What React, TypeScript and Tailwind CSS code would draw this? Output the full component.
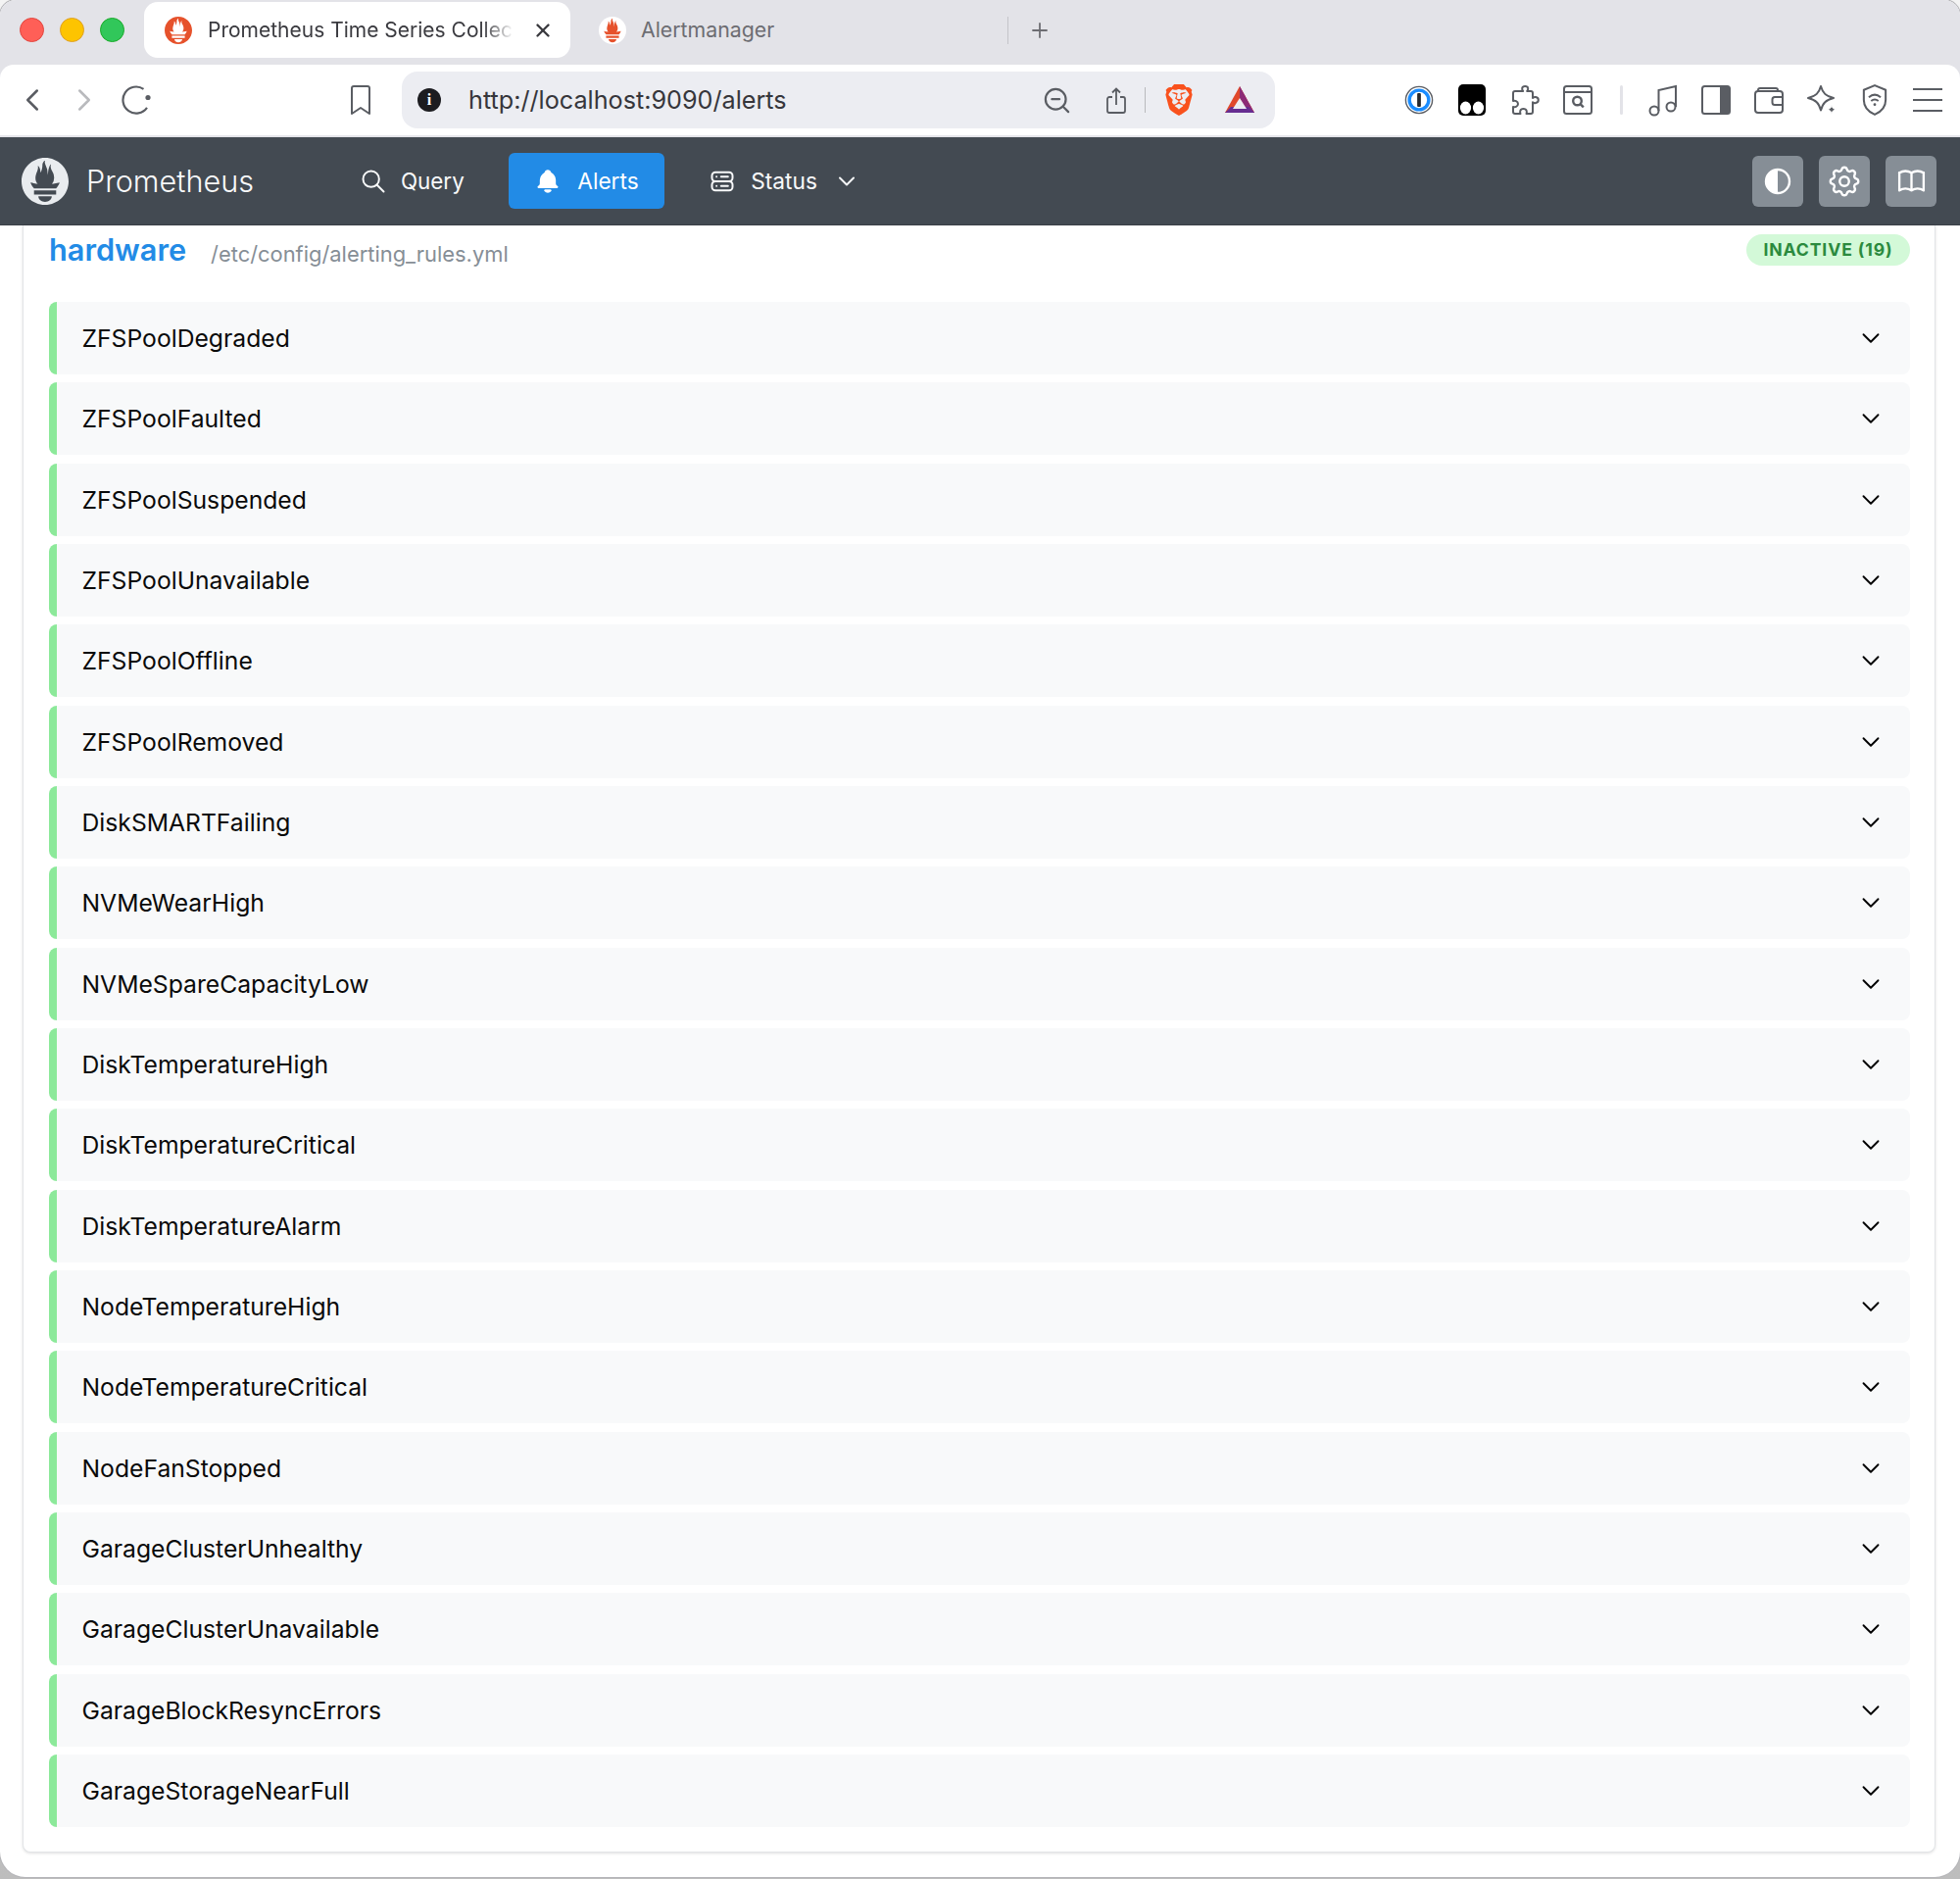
import { SiBrave, SiPrometheus } from "react-icons/si";
import {
  TbBellFilled,
  TbBook,
  TbChevronDown,
  TbSearch,
  TbServer2,
  TbSettings,
} from "react-icons/tb";
import { ChevronLeft, ChevronRight, Plus, X, ZoomOut } from "lucide-react";
import type { ReactNode } from "react";

const rules = [
  "ZFSPoolDegraded",
  "ZFSPoolFaulted",
  "ZFSPoolSuspended",
  "ZFSPoolUnavailable",
  "ZFSPoolOffline",
  "ZFSPoolRemoved",
  "DiskSMARTFailing",
  "NVMeWearHigh",
  "NVMeSpareCapacityLow",
  "DiskTemperatureHigh",
  "DiskTemperatureCritical",
  "DiskTemperatureAlarm",
  "NodeTemperatureHigh",
  "NodeTemperatureCritical",
  "NodeFanStopped",
  "GarageClusterUnhealthy",
  "GarageClusterUnavailable",
  "GarageBlockResyncErrors",
  "GarageStorageNearFull",
];

function Slot({ children }: { children: ReactNode }) {
  return <div className="flex w-[54px] shrink-0 items-center justify-center text-[#5a5d63]">{children}</div>;
}

// flame only, orange on a white disc
function FlameFavicon() {
  return (
    <svg viewBox="0 0 24 24" className="h-[28px] w-[28px]">
      <circle cx="12" cy="12" r="12" fill="#fff" />
      <path
        fill="#e6522c"
        d="M12 22.46c-1.885 0-3.414-1.26-3.414-2.814h6.828c0 1.553-1.528 2.813-3.414 2.813zm5.64-3.745H6.36v-2.046h11.28v2.046zm-.04-3.098H6.391c-.037-.043-.075-.086-.111-.13-1.155-1.401-1.427-2.133-1.691-2.879-.005-.025 1.4.287 2.395.511 0 0 .513.119 1.262.255-.72-.843-1.147-1.915-1.147-3.01 0-2.406 1.845-4.508 1.18-6.207.648.053 1.34 1.367 1.387 3.422.689-.951.977-2.69.977-3.755 0-1.103.727-2.385 1.454-2.429-.648 1.069.168 1.984.894 4.256.272.854.237 2.29.447 3.201.07-1.892.395-4.652 1.595-5.605-.529 1.2.079 2.702.494 3.424.671 1.164 1.078 2.047 1.078 3.716a4.642 4.642 0 0 1-1.11 2.996c.792-.149 1.34-.283 1.34-.283l2.573-.502s-.374 1.538-1.81 3.019z"
      />
    </svg>
  );
}

function TabStrip() {
  return (
    <div className="flex h-[66px] items-start bg-[#e3e3e8] pt-[2px]">
      <div className="flex h-[57px] items-center gap-[16px] pl-[20px]">
        <div className="h-[25px] w-[25px] rounded-full border border-[#e2463f] bg-[#ff5f57]" />
        <div className="h-[25px] w-[25px] rounded-full border border-[#dfa023] bg-[#fdc400]" />
        <div className="h-[25px] w-[25px] rounded-full border border-[#1aab29] bg-[#31c75a]" />
      </div>
      <div className="ml-[20px] flex h-[57px] w-[435px] items-center rounded-[14px] bg-white pl-[21px]">
        <SiPrometheus className="h-[28px] w-[28px] text-[#e6522c]" />
        <span className="ml-[16px] w-[312px] overflow-hidden whitespace-nowrap text-[21px] text-[#3a3a3f] [mask-image:linear-gradient(to_right,black_90%,transparent)]">
          Prometheus Time Series Collec
        </span>
        <X className="ml-[19px] h-[22px] w-[22px] text-[#3a3a3f]" strokeWidth={2.6} />
      </div>
      <div className="flex h-[57px] items-center">
        <div className="ml-[29px]">
          <FlameFavicon />
        </div>
        <span className="ml-[15px] text-[21.3px] text-[#6d6d72]">Alertmanager</span>
        <div className="ml-[238px] h-[28px] w-[1px] bg-[#c4c4c9]" />
        <Plus className="ml-[20px] h-[24px] w-[24px] text-[#6d6d72]" strokeWidth={1.8} />
      </div>
    </div>
  );
}

function Toolbar() {
  return (
    <div className="bg-[#e3e3e8]">
      <div className="flex h-[72px] items-center rounded-t-[14px] bg-white pl-[6px]">
        <div className="flex w-[53px] justify-center text-[#5a5d63]">
          <ChevronLeft className="h-[38px] w-[38px]" strokeWidth={1.6} />
        </div>
        <div className="flex w-[53px] justify-center text-[#b9babd]">
          <ChevronRight className="h-[38px] w-[38px]" strokeWidth={1.6} />
        </div>
        <div className="flex w-[53px] justify-center text-[#5a5d63]">
          <svg viewBox="0 0 30 30" fill="none" stroke="currentColor" strokeWidth="2.2" className="h-[30px] w-[30px]">
            <path d="M22.5 3.8A13.5 13.5 0 1 0 26 22.8" />
            <circle cx="27" cy="12.5" r="2.6" fill="currentColor" stroke="none" />
          </svg>
        </div>
        <div className="ml-[176px]">
          <Slot>
            <svg viewBox="0 0 22 30" fill="none" stroke="currentColor" strokeWidth="2" strokeLinejoin="round" className="h-[30px] w-[22px]">
              <path d="M2 3a2 2 0 0 1 2-2h14a2 2 0 0 1 2 2v26l-9-6-9 6z" />
            </svg>
          </Slot>
        </div>
        <div className="ml-[15px] flex h-[58px] w-[891px] items-center rounded-[16px] bg-[#ecedf2]">
          <div className="ml-[16px] flex h-[24px] w-[24px] items-center justify-center rounded-full bg-[#1c1c20] font-['Liberation_Serif',serif] text-[16px] font-bold text-white">
            i
          </div>
          <span className="ml-[28px] mt-[2px] w-[520px] text-[25.2px] text-[#36363b]">http://localhost:9090/alerts</span>
          <div className="ml-[64.5px] flex items-center">
            <ZoomOut className="h-[31px] w-[31px] text-[#5a5d63]" strokeWidth={1.7} />
            <svg viewBox="0 0 20 27" fill="none" stroke="#5a5d63" strokeWidth="1.8" className="ml-[35.5px] h-[27px] w-[20px]">
              <path d="M6 10H3a2 2 0 0 0-2 2v12a2 2 0 0 0 2 2h14a2 2 0 0 0 2-2V12a2 2 0 0 0-2-2h-3" />
              <path d="M10 18V2M6 5.5 10 1.5l4 4" />
            </svg>
            <div className="ml-[19px] h-[26px] w-[1px] bg-[#b9babd]" />
            <SiBrave className="ml-[17.5px] h-[32px] w-[32px] text-[#f9511d]" />
            <svg viewBox="0 0 32 32" className="ml-[30px] h-[32px] w-[32px]">
              <path d="M16 2 31 29H1z" fill="#e0482b" />
              <path d="M16 2 31 29H24L16 14z" fill="#8c2a76" />
              <path d="M1 29 7 23H25L31 29z" fill="#662d91" />
              <path d="M16 14 23 25H9z" fill="#ecedf2" />
            </svg>
          </div>
        </div>
        <div className="ml-[120px] flex">
          <Slot>
            <svg viewBox="0 0 32 32" className="h-[30px] w-[30px]">
              <circle cx="16" cy="16" r="14.5" fill="#fff" stroke="#5a5d63" strokeWidth="1.5" />
              <circle cx="16" cy="16" r="10.5" fill="none" stroke="#1a8cff" strokeWidth="3.6" />
              <rect x="14" y="8.5" width="4" height="15" rx="1" fill="#26282c" />
            </svg>
          </Slot>
          <Slot>
            <svg viewBox="0 0 28 32" className="h-[32px] w-[28px]">
              <rect x="0" y="0" width="28" height="32" rx="5" fill="#000" />
              <ellipse cx="7.5" cy="24" rx="5.6" ry="6.4" fill="#fff" />
              <ellipse cx="20.5" cy="24" rx="5.6" ry="6.4" fill="#fff" />
            </svg>
          </Slot>
          <Slot>
            <svg viewBox="0 0 30 30" fill="none" stroke="currentColor" strokeWidth="2" strokeLinejoin="round" className="h-[30px] w-[30px]">
              <path d="M5 6h8.2c-1-1-1.2-2-1-3 .3-1.3 1.5-2 3-2s2.8.8 3 2c.2 1-.1 2-1 3H21a2 2 0 0 1 2 2v5c1-.8 2-1.1 3-.9 1.5.3 2.8 1.500 2.8 3s-1.300 2.700-2.800 3c-1 .2-2-.1-3-.9V27a2 2 0 0 1-2 2h-4.500c.4-1 .5-2 .2-3-.4-1.300-1.700-2-3.200-2s-2.800.7-3.200 2c-.3 1-.2 2 .2 3H5a2 2 0 0 1-2-2v-5c1 .4 2 .4 3-.1 1.200-.6 2-1.700 2-2.900s-.8-2.300-2-2.900c-1-.5-2-.5-3-.1V8a2 2 0 0 1 2-2z" />
            </svg>
          </Slot>
          <Slot>
            <svg viewBox="0 0 30 30" fill="none" stroke="currentColor" strokeWidth="2" className="h-[30px] w-[30px]">
              <rect x="1" y="1" width="28" height="28" rx="2.5" />
              <path d="M1 7h28" />
              <circle cx="14.5" cy="16" r="4.3" strokeWidth="2.4" />
              <path d="m17.8 19.3 3 3" strokeWidth="2.4" />
            </svg>
          </Slot>
        </div>
        <div className="ml-[16px] h-[30px] w-[3px] rounded-full bg-[#e3e3e8]" />
        <div className="ml-[14px] flex">
          <Slot>
            <svg viewBox="0 0 30 34" fill="none" stroke="currentColor" strokeWidth="2" className="h-[34px] w-[30px]">
              <circle cx="6" cy="28" r="4.5" />
              <circle cx="23" cy="24" r="4.5" />
              <path d="M10.5 28V7L28 3v21" />
            </svg>
          </Slot>
          <Slot>
            <svg viewBox="0 0 30 30" className="h-[30px] w-[30px]">
              <rect x="1" y="1" width="28" height="28" rx="2.5" fill="none" stroke="currentColor" strokeWidth="2" />
              <rect x="19" y="1" width="10" height="28" fill="currentColor" />
            </svg>
          </Slot>
          <Slot>
            <svg viewBox="0 0 30 27" fill="none" stroke="currentColor" strokeWidth="2" className="h-[27px] w-[30px]">
              <rect x="1" y="4" width="28" height="22" rx="3" />
              <path d="M4 4V3a2 2 0 0 1 2-2h16a2 2 0 0 1 2 2v1" />
              <path d="M29 10H21a2.5 2.5 0 0 0-2.5 2.5v3a2.5 2.5 0 0 0 2.5 2.5h8" />
            </svg>
          </Slot>
          <Slot>
            <svg viewBox="0 0 30 30" fill="none" stroke="currentColor" strokeWidth="2" strokeLinejoin="round" className="h-[30px] w-[30px]">
              <path d="M14 1c2 7 5 10 13 12-8 2-11 5-13 12.5-2-7.5-5-10.5-13-12.5 8-2 11-5 13-12z" />
              <path
                d="M25 20c.5 3 1.5 4 4.5 4.7-3 .7-4 1.7-4.500 4.800-.5-3.100-1.500-4.100-4.500-4.800 3-.7 4-1.700 4.500-4.700z"
                fill="currentColor"
                stroke="#fff"
                strokeWidth="1"
              />
            </svg>
          </Slot>
          <Slot>
            <svg viewBox="0 0 28 36" fill="none" stroke="currentColor" strokeWidth="2.2" className="h-[34px] w-[26px]">
              <path d="M14 2 26 7v11c0 8-5 13-12 16C7 31 2 26 2 18V7z" strokeLinejoin="round" />
              <path d="M7.5 15c4-3.500 9-3.500 13 0M10 19c2.500-2 5.500-2 8 0" />
              <circle cx="14" cy="23" r="1.5" fill="currentColor" stroke="none" />
            </svg>
          </Slot>
          <Slot>
            <svg viewBox="0 0 30 24" stroke="currentColor" strokeWidth="2" className="h-[24px] w-[30px]">
              <path d="M0 1h30M0 12h30M0 23h30" />
            </svg>
          </Slot>
        </div>
      </div>
    </div>
  );
}

function IconButton({ children }: { children: ReactNode }) {
  return (
    <button type="button" className="flex h-[52px] w-[52px] items-center justify-center rounded-[6px] bg-[#868e96] text-white">
      {children}
    </button>
  );
}

function Navbar() {
  return (
    <div className="flex h-[92px] items-center border-t-[2px] border-b border-t-[#e5e5ea] border-b-[#3b4148] bg-[#434a52] pl-[22px] pr-[24px] text-[#f8f9fa]">
      <SiPrometheus className="h-[48px] w-[48px] text-[#e9ecef]" />
      <span className="ml-[18px] mt-[2px] text-[30.6px] font-light leading-none">Prometheus</span>
      <TbSearch className="ml-[108px] h-[28px] w-[28px]" strokeWidth={1.7} />
      <span className="ml-[14px] mt-[1px] text-[22.4px]">Query</span>
      <button type="button" className="ml-[45.5px] flex h-[57px] w-[159px] items-center rounded-[6px] bg-[#228be6] pl-[26px] text-[22.7px] text-white">
        <TbBellFilled className="h-[28px] w-[28px]" />
        <span className="ml-[16px] mt-[1px]">Alerts</span>
      </button>
      <TbServer2 className="ml-[45px] h-[28px] w-[28px]" strokeWidth={1.7} />
      <span className="ml-[15px] mt-[1px] text-[22.7px]">Status</span>
      <TbChevronDown className="ml-[16px] h-[28px] w-[28px]" strokeWidth={1.7} />
      <div className="ml-auto flex gap-[16px]">
        <IconButton>
          <svg viewBox="0 0 28 28" className="h-[28px] w-[28px]">
            <circle cx="14" cy="14" r="12" fill="none" stroke="currentColor" strokeWidth="2.4" />
            <path d="M14 2a12 12 0 0 0 0 24z" fill="currentColor" />
          </svg>
        </IconButton>
        <IconButton>
          <TbSettings className="h-[38px] w-[38px]" strokeWidth={1.5} />
        </IconButton>
        <IconButton>
          <TbBook className="h-[33px] w-[33px]" strokeWidth={1.7} />
        </IconButton>
      </div>
    </div>
  );
}

function RuleRow({ name }: { name: string }) {
  return (
    <div className="flex h-[74px] shrink-0 items-center rounded-[8px] border-l-[8px] border-[#8ce99a] bg-[#f8f9fa] pl-[25.5px] pr-[25px]">
      <span className="mt-[1px] text-[24.7px] text-[#0a0a0a]">{name}</span>
      <TbChevronDown className="ml-auto h-[30px] w-[30px] text-black" strokeWidth={1.5} />
    </div>
  );
}

export default function App() {
  return (
    <div className="h-[1917px] w-[2000px] overflow-hidden bg-linear-to-b from-[#f4f4f4] to-[#bdbdbd] font-['Inter',sans-serif]">
      <div className="flex h-[1915px] flex-col overflow-hidden rounded-t-[16px] rounded-b-[26px] bg-white shadow-[0_0_0_1px_#b4b4b8]">
        <TabStrip />
        <Toolbar />
        <Navbar />
        <div className="pl-[23px] pr-[25px]">
          <div className="h-[1660px] rounded-b-[8px] border-x border-b border-[#e2e4e7] bg-white pl-[26px] pr-[25px] shadow-[0_1px_3px_rgba(0,0,0,0.12)]">
            <div className="flex h-[78px] items-start">
              <span className="mt-[3px] text-[30.7px] font-semibold leading-[44px] text-[#228be6]">hardware</span>
              <span className="ml-[25px] mt-[11px] text-[21.9px] leading-[36px] text-[#868e96]">/etc/config/alerting_rules.yml</span>
              <span className="ml-auto mt-[9px] flex h-[32px] w-[167px] items-center justify-center rounded-full bg-[#d3f9d8] text-[17.6px] font-bold tracking-[0.05em] text-[#2b8a3e]">
                INACTIVE (19)
              </span>
            </div>
            <div className="flex flex-col gap-[8.33px]">
              {rules.map((name) => (
                <RuleRow key={name} name={name} />
              ))}
            </div>
          </div>
        </div>
      </div>
    </div>
  );
}
